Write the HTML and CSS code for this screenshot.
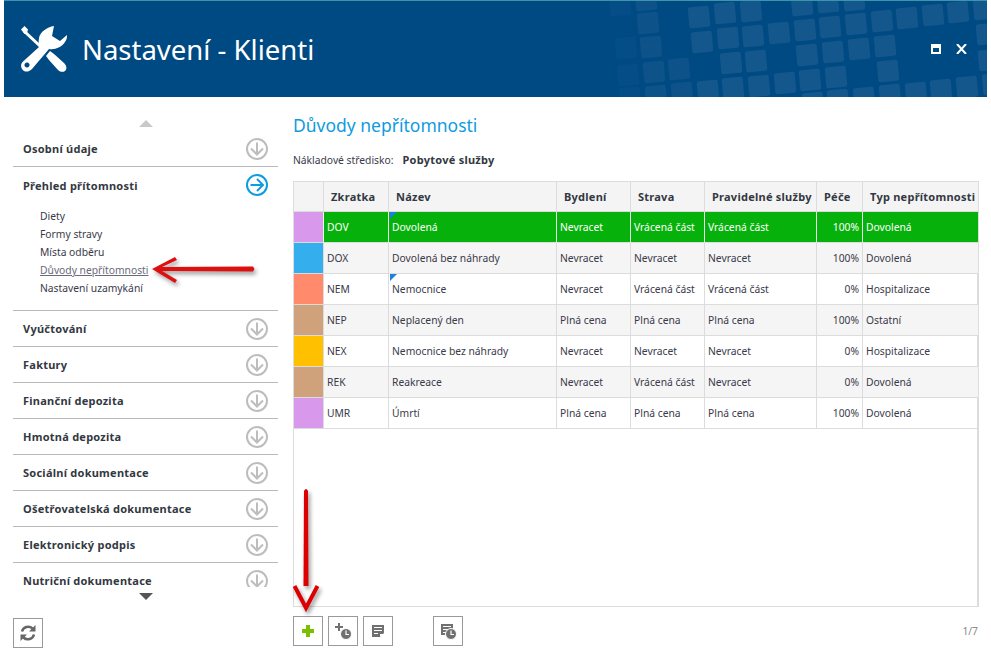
FILE: index.html
```html
<!DOCTYPE html>
<html lang="cs">
<head>
<meta charset="utf-8">
<title>Nastavení - Klienti</title>
<link rel="stylesheet" href="styles.css">
</head>
<body>
<div class="window">
  <header class="header">
    <svg class="pattern" width="991" height="97" viewBox="0 0 991 97">
      <defs><rect id="sq" x="-10.500" y="-10.500" width="21" height="21" rx="2.500" transform="rotate(-5)"/></defs>
      <g fill="#fff" fill-opacity=".02">
        <use href="#sq" x="620" y="5"/><use href="#sq" x="626" y="48"/><use href="#sq" x="628" y="75"/><use href="#sq" x="630" y="98"/>
      </g>
      <g fill="#fff" fill-opacity=".05">
        <use href="#sq" x="646" y="0"/><use href="#sq" x="648" y="23"/><use href="#sq" x="651" y="47"/><use href="#sq" x="654" y="72"/><use href="#sq" x="656" y="96"/><use href="#sq" x="679" y="69"/><use href="#sq" x="682" y="93"/>
      </g>
      <g fill="#fff" fill-opacity=".075">
        <use href="#sq" x="699" y="17"/><use href="#sq" x="725" y="13"/><use href="#sq" x="751" y="11"/><use href="#sq" x="802" y="5"/><use href="#sq" x="828" y="2"/><use href="#sq" x="854" y="0"/>
        <use href="#sq" x="702" y="42"/><use href="#sq" x="728" y="38"/><use href="#sq" x="753" y="36"/><use href="#sq" x="779" y="33"/><use href="#sq" x="805" y="30"/><use href="#sq" x="830" y="27"/><use href="#sq" x="856" y="24"/><use href="#sq" x="882" y="21"/><use href="#sq" x="907" y="18"/><use href="#sq" x="933" y="15"/><use href="#sq" x="958" y="12"/><use href="#sq" x="984" y="9"/>
        <use href="#sq" x="731" y="63"/><use href="#sq" x="756" y="61"/><use href="#sq" x="807" y="55"/><use href="#sq" x="833" y="52"/><use href="#sq" x="859" y="49"/><use href="#sq" x="885" y="46"/><use href="#sq" x="987" y="34"/>
        <use href="#sq" x="708" y="91"/><use href="#sq" x="733" y="88"/><use href="#sq" x="759" y="86"/><use href="#sq" x="785" y="83"/><use href="#sq" x="810" y="80"/><use href="#sq" x="836" y="77"/><use href="#sq" x="888" y="71"/><use href="#sq" x="989" y="60"/>
        <use href="#sq" x="813" y="103"/><use href="#sq" x="838" y="100"/><use href="#sq" x="864" y="98"/><use href="#sq" x="890" y="95"/><use href="#sq" x="916" y="93"/><use href="#sq" x="941" y="90"/><use href="#sq" x="967" y="87"/><use href="#sq" x="993" y="84"/>
      </g>
    </svg>
    <svg class="logo" width="46" height="46" viewBox="0 0 46 46">
      <path fill="#fff" fill-rule="evenodd" d="M33 0C26 1 19 6 18 12C17.500 16 17.500 18 18 21L1.500 36C-1 39 0 43 3 45C6 46.500 9 45 11 43L28 23C34 24 41 21 44 16C46 13 46 11 46 9L39 15L31 10ZM6 36.500a2.500 2.500 0 1 0 .01 0z"/>
      <path fill="none" stroke="#fff" stroke-width="3" d="M3 5L19 20"/>
      <path fill="#fff" d="M0 3.500L3.500 0L7 3.500L6 7L3.500 8zM25 30L29 25L33 28L43 37C46 40 46 43 44 45C42 46.500 39 46 37 44L28 34z"/>
    </svg>
    <h1 class="title">Nastavení - Klienti</h1>
    <div class="win-btns">
      <svg width="10" height="10" viewBox="0 0 10 10"><path fill="#fff" fill-rule="evenodd" d="M0 0h10v10H0zM2 4v4h6V4z"/></svg>
      <svg width="11" height="10" viewBox="0 0 11 10"><path stroke="#fff" stroke-width="2" d="M1 0l9 10M10 0L1 10"/></svg>
    </div>
  </header>
  <div class="body">
    <aside class="side">
      <div class="scroll-up"></div>
      <nav class="menu">
        <div class="item"><span>Osobní údaje</span><svg class="circ" width="24" height="24" viewBox="0 0 24 24"><use href="#down"/></svg></div>
        <div class="item open">
          <div class="item-head"><span>Přehled přítomnosti</span>
            <svg class="circ" width="24" height="24" viewBox="0 0 24 24"><circle cx="12" cy="12" r="10" fill="none" stroke="#0f9be0" stroke-width="2"/><path d="M5.500 12h12M12 6l6 6-6 6" fill="none" stroke="#0f9be0" stroke-width="2"/></svg></div>
          <ul class="sub">
            <li>Diety</li><li>Formy stravy</li><li>Místa odběru</li><li class="active">Důvody nepřítomnosti</li><li>Nastavení uzamykání</li>
          </ul>
        </div>
        <div class="item"><span>Vyúčtování</span><svg class="circ" width="24" height="24" viewBox="0 0 24 24"><use href="#down"/></svg></div>
        <div class="item"><span>Faktury</span><svg class="circ" width="24" height="24" viewBox="0 0 24 24"><use href="#down"/></svg></div>
        <div class="item"><span>Finanční depozita</span><svg class="circ" width="24" height="24" viewBox="0 0 24 24"><use href="#down"/></svg></div>
        <div class="item"><span>Hmotná depozita</span><svg class="circ" width="24" height="24" viewBox="0 0 24 24"><use href="#down"/></svg></div>
        <div class="item"><span>Sociální dokumentace</span><svg class="circ" width="24" height="24" viewBox="0 0 24 24"><use href="#down"/></svg></div>
        <div class="item"><span>Ošetřovatelská dokumentace</span><svg class="circ" width="24" height="24" viewBox="0 0 24 24"><use href="#down"/></svg></div>
        <div class="item"><span>Elektronický podpis</span><svg class="circ" width="24" height="24" viewBox="0 0 24 24"><use href="#down"/></svg></div>
        <div class="item"><span>Nutriční dokumentace</span><svg class="circ" width="24" height="24" viewBox="0 0 24 24"><use href="#down"/></svg></div>
      </nav>
      <div class="scroll-down"></div>
      <button class="tool refresh" type="button">
        <svg width="28" height="28" viewBox="0 0 28 28"><g fill="none" stroke="#666" stroke-width="2.500"><path d="M8 12.500a6.300 6.300 0 0 1 10.500-3"/><path d="M20 15.500a6.300 6.300 0 0 1-10.500 3"/></g><path fill="#666" d="M21.500 6v6.500H15zM6.500 22v-6.500H13z"/></svg>
      </button>
    </aside>
    <main class="main">
      <h2 class="heading">Důvody nepřítomnosti</h2>
      <div class="filter"><span>Nákladové středisko:</span><b>Pobytové služby</b></div>
      <div class="grid">
        <table>
          <colgroup><col class="c0"><col class="c1"><col class="c2"><col class="c3"><col class="c4"><col class="c5"><col class="c6"><col class="c7"></colgroup>
          <thead><tr><th></th><th>Zkratka</th><th>Název</th><th>Bydlení</th><th>Strava</th><th>Pravidelné služby</th><th>Péče</th><th>Typ nepřítomnosti</th></tr></thead>
          <tbody>
            <tr class="selected"><td class="sw violet"></td><td>DOV</td><td class="flag">Dovolená</td><td>Nevracet</td><td>Vrácená část</td><td>Vrácená část</td><td class="num">100%</td><td>Dovolená</td></tr>
            <tr class="alt"><td class="sw blue"></td><td>DOX</td><td>Dovolená bez náhrady</td><td>Nevracet</td><td>Nevracet</td><td>Nevracet</td><td class="num">100%</td><td>Dovolená</td></tr>
            <tr><td class="sw coral"></td><td>NEM</td><td class="flag">Nemocnice</td><td>Nevracet</td><td>Vrácená část</td><td>Vrácená část</td><td class="num">0%</td><td>Hospitalizace</td></tr>
            <tr class="alt"><td class="sw tan"></td><td>NEP</td><td>Neplacený den</td><td>Plná cena</td><td>Plná cena</td><td>Plná cena</td><td class="num">100%</td><td>Ostatní</td></tr>
            <tr><td class="sw amber"></td><td>NEX</td><td>Nemocnice bez náhrady</td><td>Nevracet</td><td>Nevracet</td><td>Nevracet</td><td class="num">0%</td><td>Hospitalizace</td></tr>
            <tr class="alt"><td class="sw tan"></td><td>REK</td><td>Reakreace</td><td>Nevracet</td><td>Vrácená část</td><td>Nevracet</td><td class="num">0%</td><td>Dovolená</td></tr>
            <tr><td class="sw violet"></td><td>UMR</td><td>Úmrtí</td><td>Plná cena</td><td>Plná cena</td><td>Plná cena</td><td class="num">100%</td><td>Dovolená</td></tr>
          </tbody>
        </table>
      </div>
      <div class="toolbar">
        <button class="tool" type="button"><svg width="28" height="28" viewBox="0 0 28 28"><path fill="#7ac000" d="M12 8h4v4h4v4h-4v4h-4v-4H8v-4h4z"/></svg></button>
        <button class="tool" type="button"><svg width="28" height="28" viewBox="0 0 28 28"><path fill="#707070" d="M9 6h2v3h3v2h-3v3H9v-3H6V9h3z"/><circle cx="17" cy="17" r="5.500" fill="#707070" stroke="#fff"/><path d="M17 13.500v4h3" fill="none" stroke="#fff" stroke-width="1.200"/></svg></button>
        <button class="tool" type="button"><svg width="28" height="28" viewBox="0 0 28 28"><path fill="#707070" d="M8 8h12v8l-4 4H8z"/><path d="M10 10.500h8M10 13.500h8M10 16.500h4" stroke="#fff" fill="none"/><path fill="#fff" d="M16 20v-3h4z"/></svg></button>
        <button class="tool gap" type="button"><svg width="28" height="28" viewBox="0 0 28 28"><path fill="#707070" d="M7 7h12v11H7z"/><path d="M9 9.500h8M9 12.500h8M9 15.500h4" stroke="#fff" fill="none"/><circle cx="17" cy="17" r="5.500" stroke="#fff" fill="#707070"/><path d="M17 13.500v4h3" fill="none" stroke="#fff" stroke-width="1.200"/></svg></button>
        <span class="pager">1/7</span>
      </div>
    </main>
  </div>
  <svg class="arrow arrow-a" width="110" height="40" viewBox="0 0 110 40"><path fill="#dd0f0f" d="M2 19L25 7L27 10L12 17L103 16.500L104.500 19L103 21.500L12 21L27 30L25 33z"/></svg>
  <svg class="arrow arrow-b" width="36" height="130" viewBox="0 0 36 130"><path fill="#dd0000" d="M14 5Q16 1 18 5L18.500 100H13.500z"/><path fill="none" stroke="#dd0000" stroke-width="4" d="M4.500 100L16 122L27.500 100"/></svg>
</div>
<svg class="defs" width="0" height="0"><defs><g id="down"><circle cx="12" cy="12" r="10" fill="none" stroke="#bdbdbd" stroke-width="2"/><path d="M12 5.500v12M6 11.500l6 6 6-6" fill="none" stroke="#bdbdbd" stroke-width="2"/></g></defs></svg>
</body>
</html>
```
FILE: styles.css
```css
* { box-sizing: border-box; }
html, body { margin: 0; height: 100%; }
body { background: #fff; font-family: "Noto Sans", Tahoma, sans-serif; font-size: 10.3px; color: #3a3a4a; overflow: hidden; }
b, .item, th { font-size: 11px; letter-spacing: .25px; font-weight: 700; }
.window { position: relative; width: 991px; height: 658px; padding-right: 4px; display: flex; flex-direction: column; }
.header { position: relative; flex: none; height: 97px; margin-left: 4px; background: #004a84; border-top: 1px solid #3d95ad; display: flex; align-items: center; padding: 0 0 0 17px; overflow: hidden; }
.pattern { position: absolute; left: -4px; top: -1px; }
.logo { position: relative; flex: none; margin-right: 15px; }
.title { position: relative; margin: 2px 0 0; font-weight: 400; font-size: 27.500px; color: #fff; line-height: 34px; }
.win-btns { position: absolute; right: 20px; top: 43px; display: flex; gap: 15px; align-items: center; }
.win-btns svg { display: block; }
.body { flex: 1; display: flex; min-height: 0; }
.side { flex: none; width: 293px; padding-left: 13px; padding-right: 15px; display: flex; flex-direction: column; }
.scroll-up { flex: none; margin: 23px auto 4px; width: 0; height: 0; border: 7px solid transparent; border-top: 0; border-bottom: 7px solid #c9c9c9; }
.scroll-down { flex: none; margin: 6px auto 0; width: 0; height: 0; border: 7px solid transparent; border-bottom: 0; border-top: 7px solid #555; }
.menu { height: 456px; overflow: hidden; flex: none; }
.item { height: 36px; padding: 0 9px 0 10px; border-bottom: 1px solid #b9b9b9; display: flex; align-items: center; justify-content: space-between; color: #333842; }
.item.open { height: 144px; display: block; }
.item-head { height: 36px; display: flex; align-items: center; justify-content: space-between; }
.circ { display: block; flex: none; }
.sub { list-style: none; margin: 4px 0 0; padding: 0 0 0 17px; font-size: 10.300px; letter-spacing: 0; font-weight: 400; color: #3a3a4a; }
.sub li { height: 18px; line-height: 18px; }
.sub .active { color: #6a6a78; text-decoration: underline; }
.tool { display: inline-flex; align-items: center; justify-content: center; width: 30px; height: 30px; padding: 0; background: #fff; border: 1px solid #9a9a9a; border-radius: 0; }
.tool svg { display: block; }
.refresh { margin-top: 18px; flex: none; }
.main { flex: 1; min-width: 0; display: flex; flex-direction: column; }
.heading { margin: 15px 0 0; font-weight: 400; font-size: 17.500px; line-height: 26px; color: #0f9be0; height: 26px; }
.filter { margin-top: 14px; height: 16px; line-height: 16px; display: flex; gap: 9px; }
.filter b { color: #333842; }
.grid { margin-top: 13px; width: 686px; height: 426px; flex: none; border: 1px solid #dcdcdc; border-right-width: 2px; }
table { border-collapse: separate; border-spacing: 0; table-layout: fixed; width: 684px; }
.c0 { width: 30px; } .c1 { width: 65px; } .c2 { width: 168px; } .c3 { width: 74px; } .c4 { width: 74px; } .c5 { width: 112px; } .c6 { width: 46px; } .c7 { width: 115px; }
td, th { height: 31px; padding: 0 3px; border-right: 1px solid #dcdcdc; border-bottom: 1px solid #dcdcdc; white-space: nowrap; overflow: hidden; text-align: left; }
td { font-weight: 400; }
th { height: 30px; background: #f4f4f4; color: #333842; padding: 0 0 1px 7px; }
th:last-child, td:last-child { border-right: 0; }
.alt td { background: #f5f5f5; }
.selected td { background: #07b10b; color: #fff; border-right-color: #e6f5e6; }
.flag { position: relative; }
.flag::before { content: ""; position: absolute; left: 1px; top: 0; border-top: 7px solid #1c80dc; border-right: 7px solid transparent; }
.num { text-align: right; }
.sw { padding: 0; }
.violet { background: #d898ec !important; } .blue { background: #35aeee !important; } .coral { background: #ff8a6c !important; } .tan { background: #cfa27c !important; } .amber { background: #ffc000 !important; }
.toolbar { flex: none; margin-top: 9px; display: flex; gap: 5px; align-items: center; width: 686px; }
.tool.gap { margin-left: 35px; }
.pager { margin-left: auto; color: #888; padding-right: 1px; }
.arrow { position: absolute; filter: drop-shadow(2px 3px 2px rgba(0,0,0,.4)); }
.arrow-a { left: 150px; top: 250px; }
.arrow-b { left: 290px; top: 486px; }
.defs { position: absolute; }
```
